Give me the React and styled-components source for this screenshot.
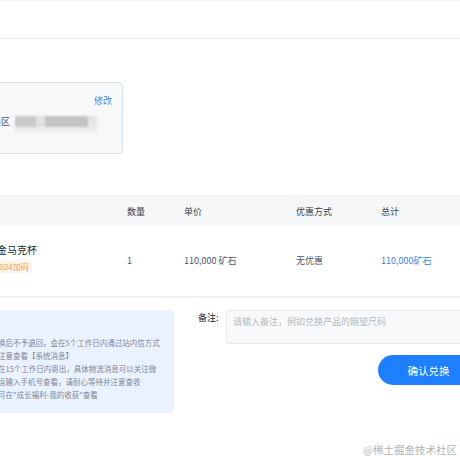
import styled, { createGlobalStyle } from "styled-components";

const GlobalStyle = createGlobalStyle`
	html, body {
		margin: 0;
		padding: 0;
		background: #fff;
		overflow: hidden;
	}
	body {
		font-family: "Noto Sans CJK SC", "Noto Sans", sans-serif;
		color: #515767;
	}
`;

const columns = [
	{ key: "name", label: "商品" },
	{ key: "count", label: "数量" },
	{ key: "price", label: "单价" },
	{ key: "discount", label: "优惠方式" },
	{ key: "total", label: "总计" },
];

const notes = [
	"换后不予退回，会在5个工作日内通过站内信方式",
	"注意查看【系统消息】",
	"在15个工作日内寄出，具体物流消息可以关注微",
	"运输入手机号查看，请耐心等待并注意查收",
	"可在\"成长福利-我的收获\"查看",
];

const blurBlocks = [
	{ w: 21, tone: "#c9c9c9" },
	{ w: 9, tone: "#e2e2e2" },
	{ w: 43, tone: "#c3c3c3" },
	{ w: 9, tone: "#e6e6e6" },
];

const App = () => {
	return (
		<Root>
			<GlobalStyle />
			<Page>
				<Header />
				<AddressSection>
					<AddressCard>
						<CardTop>
							<EditLink>修改</EditLink>
						</CardTop>
						<AddressRow>
							<AddressText>张三 138****0000 大连市中山区</AddressText>
							<Blurred>
								{blurBlocks.map((b, i) => (
									<BlurBlock key={i} $w={b.w} $tone={b.tone} />
								))}
							</Blurred>
						</AddressRow>
					</AddressCard>
				</AddressSection>

				<Table>
					<HeadRow>
						{columns.map((c) => (
							<HeadCell key={c.key}>{c.key === "name" ? "" : c.label}</HeadCell>
						))}
					</HeadRow>
					<BodyRow>
						<ProductCell>
							<ProductName>掘金马克杯</ProductName>
							<Tag>2024加码</Tag>
						</ProductCell>
						<Cell>1</Cell>
						<Cell>110,000 矿石</Cell>
						<Cell>无优惠</Cell>
						<Cell $accent>110,000矿石</Cell>
					</BodyRow>
				</Table>

				<Bottom>
					<InfoBox>
						{notes.map((n) => (
							<InfoLine key={n}>{n}</InfoLine>
						))}
					</InfoBox>
					<RemarkColumn>
						<RemarkRow>
							<RemarkLabel>备注:</RemarkLabel>
							<RemarkInput placeholder="请输入备注，例如兑换产品的期望尺码" />
						</RemarkRow>
						<ConfirmButton>确认兑换</ConfirmButton>
					</RemarkColumn>
				</Bottom>
				<Footer />
			</Page>
			<Watermark>@稀土掘金技术社区</Watermark>
		</Root>
	);
};

export default App;

const Root = styled.div`
	position: relative;
	width: 460px;
	height: 460px;
	overflow: hidden;
`;

const Page = styled.div`
	margin-left: -140px;
	width: 619px;
`;

const Header = styled.div`
	height: 39px;
	box-sizing: border-box;
	border-top: 1px solid #f4f4f4;
	border-bottom: 1px solid #e9e9e9;
	margin-left: -40px;
	width: 800px;
`;

const AddressSection = styled.div`
	padding-top: 43px;
`;

const AddressCard = styled.div`
	width: 263px;
	height: 72px;
	box-sizing: border-box;
	padding: 11px 10px;
	background: #f6f8fa;
	border: 1px solid #d3e1ec;
	border-radius: 4px;
	display: flex;
	flex-direction: column;
`;

const CardTop = styled.div`
	display: flex;
	justify-content: flex-end;
	line-height: 14px;
`;

const EditLink = styled.span`
	font-size: 9px;
	color: #4a86e8;
	cursor: pointer;
`;

const AddressRow = styled.div`
	margin-top: 7px;
	display: flex;
	align-items: flex-start;
	line-height: 14px;
`;

const AddressText = styled.span`
	width: 139px;
	flex: none;
	text-align: right;
	white-space: nowrap;
	overflow: hidden;
	font-size: 9px;
	color: #555;
`;

const Blurred = styled.div`
	margin-left: 5px;
	margin-top: 1px;
	display: flex;
	filter: blur(1.2px);
	border-bottom: 5px solid #ececec;
`;

const BlurBlock = styled.div`
	width: ${(p) => p.$w}px;
	height: 11px;
	background: ${(p) => p.$tone};
`;

const Table = styled.div`
	margin-top: 41px;
`;

const grid = `
	display: grid;
	grid-template-columns: 267px 57px 112px 85px 98px;
	align-items: center;
`;

const HeadRow = styled.div`
	${grid};
	height: 31px;
	background: #f6f7f9;
	border-top: 1px solid #f0f1f3;
	box-sizing: border-box;
`;

const HeadCell = styled.div`
	font-size: 9px;
	color: #3d4350;
`;

const BodyRow = styled.div`
	${grid};
	height: 72px;
	box-sizing: border-box;
	border-bottom: 2px solid #eff0f2;
`;

const Cell = styled.div`
	font-size: 9px;
	color: ${(p) => (p.$accent ? "#3f7fe6" : "#515767")};
	padding-bottom: 2px;
`;

const ProductCell = styled.div`
	display: flex;
	flex-direction: column;
	align-items: flex-start;
	gap: 3px;
	padding-left: 127px;
	padding-bottom: 6px;
`;

const ProductName = styled.div`
	font-size: 10px;
	line-height: 14px;
	color: #252933;
`;

const Tag = styled.span`
	margin-left: 5px;
	font-size: 8px;
	line-height: 13px;
	padding: 0 3px;
	color: #f0a04b;
	background: #fff4e8;
	border-radius: 2px;
`;

const Bottom = styled.div`
	margin-top: 12px;
	display: flex;
	align-items: flex-start;
	gap: 24px;
`;

const InfoBox = styled.div`
	width: 314px;
	height: 103px;
	box-sizing: border-box;
	padding: 26px 0 0 138px;
	background: #eaf2ff;
	border-radius: 4px;
	flex: none;
`;

const InfoLine = styled.div`
	font-size: 7.5px;
	line-height: 13px;
	color: #7f8794;
	white-space: nowrap;
`;

const RemarkColumn = styled.div`
	flex: 1;
	display: flex;
	flex-direction: column;
	align-items: flex-end;
`;

const RemarkRow = styled.div`
	width: 100%;
	display: flex;
	align-items: flex-start;
`;

const RemarkLabel = styled.label`
	width: 28px;
	flex: none;
	font-size: 9px;
	line-height: 16px;
	color: #252933;
`;

const RemarkInput = styled.textarea`
	flex: 1;
	height: 34px;
	box-sizing: border-box;
	resize: none;
	padding: 4px 6px;
	font-family: inherit;
	font-size: 9px;
	line-height: 13px;
	background: #f8f9fa;
	border: 1px solid #e6e8eb;
	border-radius: 3px;
	outline: none;
	&::placeholder {
		color: #b6bac1;
	}
`;

const ConfirmButton = styled.button`
	margin-top: 11px;
	width: 101px;
	height: 30px;
	border: none;
	border-radius: 15px;
	background: #1e80ff;
	color: #fff;
	font-family: inherit;
	font-size: 10.5px;
	cursor: pointer;
`;

const Footer = styled.div`
	margin-top: 47px;
	margin-left: -40px;
	width: 800px;
	border-top: 2px solid #e4e6ea;
`;

const Watermark = styled.div`
	position: absolute;
	right: 3px;
	top: 442px;
	font-size: 10.5px;
	color: #b4b4b4;
	white-space: nowrap;
`;
